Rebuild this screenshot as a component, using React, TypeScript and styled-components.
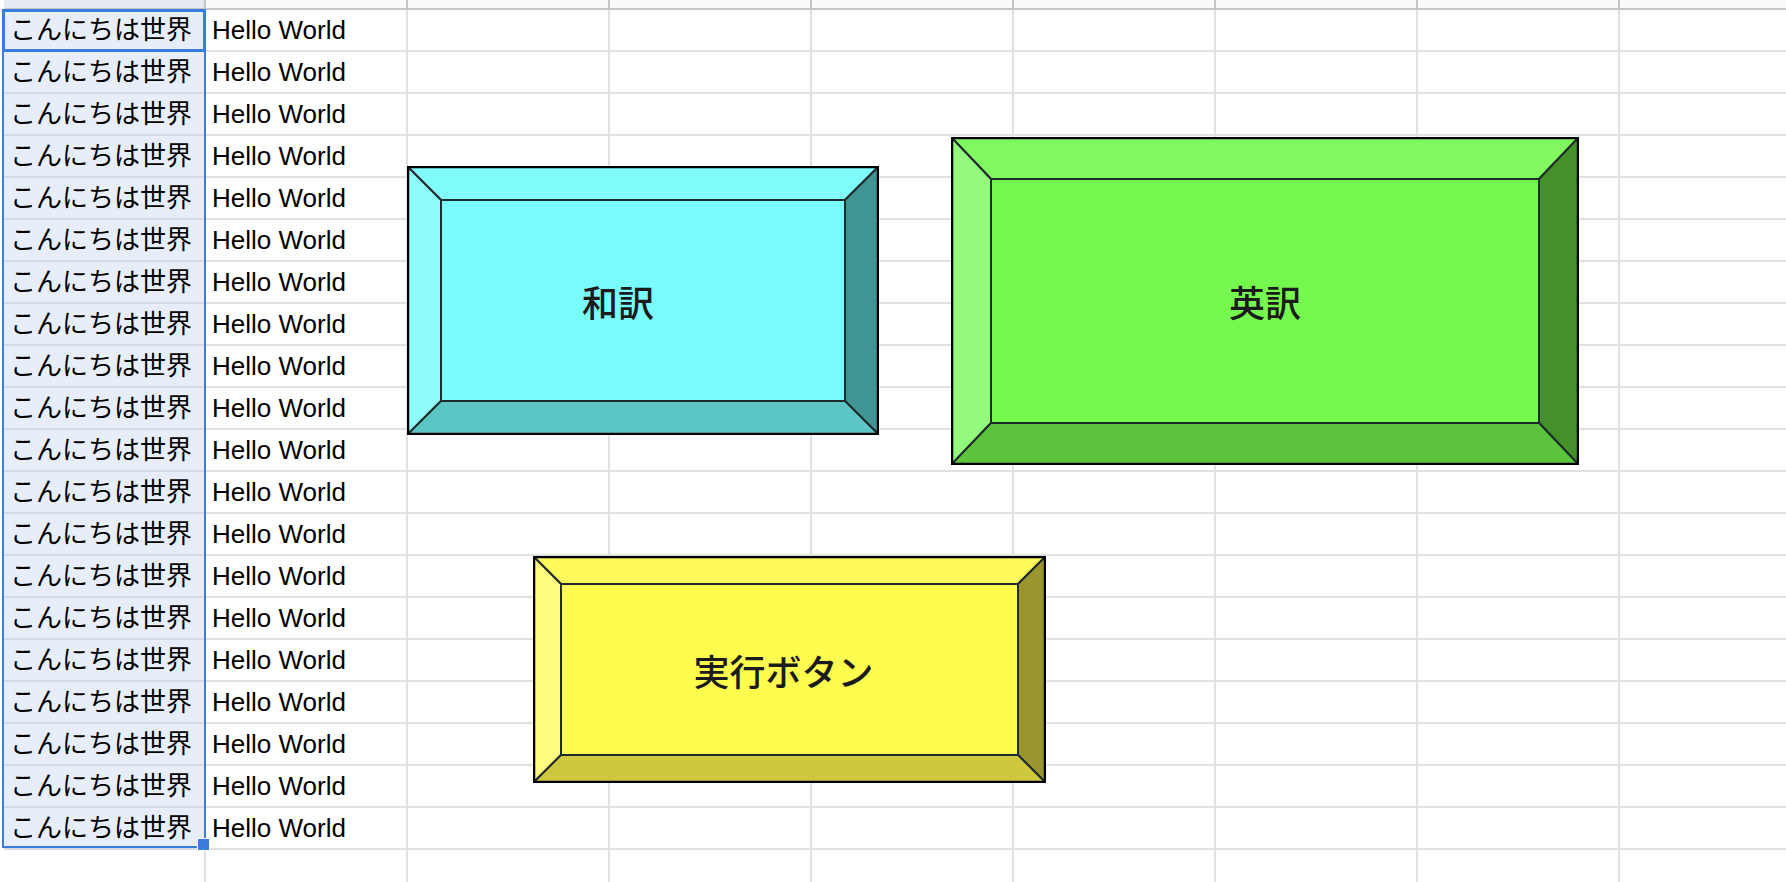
import React from 'react'
import styled, { createGlobalStyle } from 'styled-components'

const GlobalStyle = createGlobalStyle`
  html, body {
    margin: 0;
    padding: 0;
    background: #ffffff;
    overflow: hidden;
  }
  body {
    font-family: 'Liberation Sans', 'Noto Sans CJK JP', sans-serif;
  }
`

const COLS = 9
const ROWS = 21
const FILLED_ROWS = 20

const Sheet = styled.div`
  position: relative;
  width: 1786px;
  height: 882px;
  overflow: hidden;
  padding-left: 4px;
  box-sizing: border-box;
`

const Grid = styled.div`
  display: grid;
  grid-template-columns: repeat(${COLS}, 202px);
  grid-template-rows: 10px;
  grid-auto-rows: 42px;
`

const HeaderCell = styled.div<{ $selected?: boolean }>`
  box-sizing: border-box;
  background: ${(p) => (p.$selected ? '#e6eaf1' : '#f8f9fa')};
  border-right: 2px solid #c4c6c8;
  border-bottom: 2px solid #c4c6c8;
`

const Cell = styled.div<{ $selected?: boolean }>`
  box-sizing: border-box;
  display: flex;
  align-items: flex-end;
  padding: 0 6px 5px;
  font-size: 26px;
  line-height: 30px;
  color: #000;
  white-space: nowrap;
  overflow: hidden;
  background: ${(p) => (p.$selected ? '#e8eef9' : '#ffffff')};
  border-right: 2px solid #e1e1e1;
  border-bottom: 2px solid ${(p) => (p.$selected ? '#d5dae3' : '#e1e1e1')};
`

const RangeOutline = styled.div`
  position: absolute;
  left: 2px;
  top: 9px;
  width: 204px;
  height: 839px;
  box-sizing: border-box;
  border: 2px solid #3b7ddd;
  pointer-events: none;
`

const ActiveCell = styled.div`
  position: absolute;
  left: 2px;
  top: 9px;
  width: 204px;
  height: 43px;
  box-sizing: border-box;
  border: 3px solid #3b7ddd;
  pointer-events: none;
`

const FillHandle = styled.div`
  position: absolute;
  left: 197px;
  top: 838px;
  width: 13px;
  height: 13px;
  box-sizing: border-box;
  background: #3b7ddd;
  border: 1px solid #ffffff;
`

type Palette = {
  face: string
  top: string
  left: string
  right: string
  bottom: string
}

const ShapeBox = styled.div<{ $x: number; $y: number; $w: number; $h: number }>`
  position: absolute;
  left: ${(p) => p.$x}px;
  top: ${(p) => p.$y}px;
  width: ${(p) => p.$w}px;
  height: ${(p) => p.$h}px;
  cursor: pointer;

  svg {
    display: block;
  }
`

const Label = styled.div<{ $shift: number }>`
  position: absolute;
  inset: 0;
  display: flex;
  align-items: center;
  justify-content: center;
  padding-right: ${(p) => p.$shift * 2}px;
  font-family: 'Noto Sans CJK JP', 'Noto Sans', sans-serif;
  font-size: 36px;
  font-weight: 500;
  color: #1b1b1b;
  white-space: nowrap;
`

type BevelProps = {
  x: number
  y: number
  w: number
  h: number
  bx: number
  by: number
  colors: Palette
  label: string
  shift?: number
}

const BevelButton = ({ x, y, w, h, bx, by, colors, label, shift = 0 }: BevelProps) => {
  const line = '#1f2a2a'
  return (
    <ShapeBox $x={x} $y={y} $w={w} $h={h}>
      <svg width={w} height={h} viewBox={`0 0 ${w} ${h}`}>
        <polygon points={`0,0 ${w},0 ${w - bx},${by} ${bx},${by}`} fill={colors.top} stroke={line} strokeWidth={2} />
        <polygon points={`0,0 ${bx},${by} ${bx},${h - by} 0,${h}`} fill={colors.left} stroke={line} strokeWidth={2} />
        <polygon points={`${w},0 ${w},${h} ${w - bx},${h - by} ${w - bx},${by}`} fill={colors.right} stroke={line} strokeWidth={2} />
        <polygon points={`0,${h} ${bx},${h - by} ${w - bx},${h - by} ${w},${h}`} fill={colors.bottom} stroke={line} strokeWidth={2} />
        <rect x={bx} y={by} width={w - 2 * bx} height={h - 2 * by} fill={colors.face} stroke={line} strokeWidth={2} />
        <rect x={1} y={1} width={w - 2} height={h - 2} fill="none" stroke="#000" strokeWidth={2.5} />
      </svg>
      <Label $shift={shift}>{label}</Label>
    </ShapeBox>
  )
}

const cyan: Palette = {
  face: '#78fcfc',
  top: '#80fcfc',
  left: '#8efcfd',
  right: '#409494',
  bottom: '#5cc6c7',
}

const green: Palette = {
  face: '#76f94f',
  top: '#80fa5e',
  left: '#93fa7e',
  right: '#44912a',
  bottom: '#5cc43c',
}

const yellow: Palette = {
  face: '#fffc50',
  top: '#fffb5c',
  left: '#fffb80',
  right: '#9a9531',
  bottom: '#cec83f',
}

export default function App() {
  const rows = Array.from({ length: ROWS }, (_, r) => r)
  const cols = Array.from({ length: COLS }, (_, c) => c)

  return (
    <>
      <GlobalStyle />
      <Sheet>
        <Grid>
          {cols.map((c) => (
            <HeaderCell key={`h${c}`} $selected={c === 0} />
          ))}
          {rows.map((r) =>
            cols.map((c) => {
              const filled = r < FILLED_ROWS
              let text = ''
              if (filled && c === 0) text = 'こんにちは世界'
              if (filled && c === 1) text = 'Hello World'
              return (
                <Cell key={`${r}-${c}`} $selected={filled && c === 0}>
                  {text}
                </Cell>
              )
            })
          )}
        </Grid>

        <RangeOutline />
        <ActiveCell />
        <FillHandle />

        <BevelButton x={407} y={166} w={472} h={269} bx={34} by={34} colors={cyan} label="和訳" shift={25} />
        <BevelButton x={951} y={137} w={628} h={328} bx={40} by={42} colors={green} label="英訳" />
        <BevelButton x={533} y={556} w={513} h={227} bx={28} by={28} colors={yellow} label="実行ボタン" shift={6} />
      </Sheet>
    </>
  )
}
